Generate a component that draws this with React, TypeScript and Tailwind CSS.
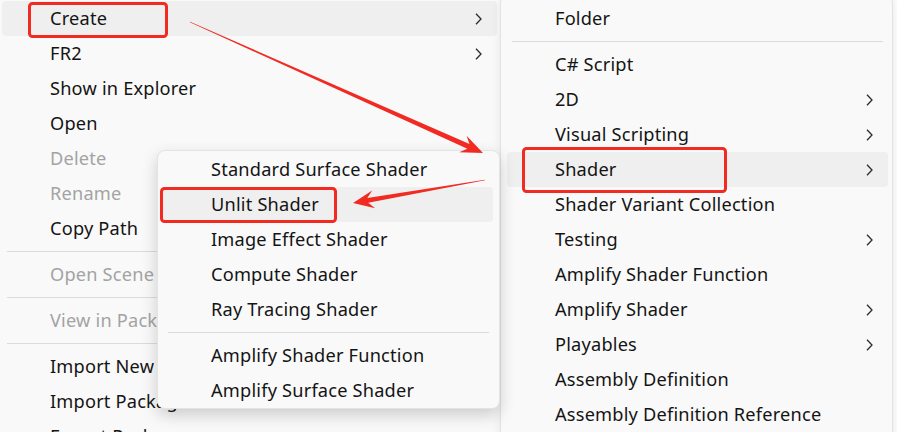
import React from "react";

type Item = { t: string; hl?: boolean; sub?: boolean; dis?: boolean } | "sep";

const leftItems: Item[] = [
  { t: "Create", hl: true, sub: true },
  { t: "FR2", sub: true },
  { t: "Show in Explorer" },
  { t: "Open" },
  { t: "Delete", dis: true },
  { t: "Rename", dis: true },
  { t: "Copy Path" },
  "sep",
  { t: "Open Scene Additive", dis: true },
  "sep",
  { t: "View in Package Manager", dis: true },
  "sep",
  { t: "Import New Asset..." },
  { t: "Import Package", sub: true },
  { t: "Export Package..." },
];

const shaderItems: Item[] = [
  { t: "Standard Surface Shader" },
  { t: "Unlit Shader", hl: true },
  { t: "Image Effect Shader" },
  { t: "Compute Shader" },
  { t: "Ray Tracing Shader" },
  "sep",
  { t: "Amplify Shader Function" },
  { t: "Amplify Surface Shader" },
];

const createItems: Item[] = [
  { t: "Folder" },
  "sep",
  { t: "C# Script" },
  { t: "2D", sub: true },
  { t: "Visual Scripting", sub: true },
  { t: "Shader", hl: true, sub: true },
  { t: "Shader Variant Collection" },
  { t: "Testing", sub: true },
  { t: "Amplify Shader Function" },
  { t: "Amplify Shader", sub: true },
  { t: "Playables", sub: true },
  { t: "Assembly Definition" },
  { t: "Assembly Definition Reference" },
];

function Chevron() {
  return (
    <svg width="7" height="12" viewBox="0 0 7 12" className="shrink-0">
      <path d="M1 0.8 L6 6 L1 11.2" fill="none" stroke="#2b2b2b" strokeWidth="1.3" />
    </svg>
  );
}

function Menu({ items, rowCls, sepCls }: { items: Item[]; rowCls: string; sepCls: string }) {
  return (
    <>
      {items.map((it, i) =>
        it === "sep" ? (
          <div key={i} className="h-[11px] flex items-center">
            <div className={`h-px bg-[#dcdcdc] flex-1 ${sepCls}`} />
          </div>
        ) : (
          <div
            key={i}
            className={`h-[35px] flex items-center rounded-[4px] pl-[48px] pr-[15px] whitespace-nowrap ${rowCls} ${
              it.hl ? "bg-[#efefef]" : ""
            } ${it.dis ? "text-[#a3a3a3]" : "text-[#141414]"}`}
          >
            <span className="flex-1">{it.t}</span>
            {it.sub && <Chevron />}
          </div>
        )
      )}
    </>
  );
}

function Arrow({ x1, y1, x2, y2, head = 22, hw = 9, sw = 2.6 }: { x1: number; y1: number; x2: number; y2: number; head?: number; hw?: number; sw?: number }) {
  const dx = x2 - x1;
  const dy = y2 - y1;
  const L = Math.hypot(dx, dy);
  const ux = dx / L;
  const uy = dy / L;
  const nx = -uy;
  const ny = ux;
  const neckX = x2 - (head - 6) * ux;
  const neckY = y2 - (head - 6) * uy;
  const bX = x2 - head * ux;
  const bY = y2 - head * uy;
  const pts = [
    [x1 + nx * 0.3, y1 + ny * 0.3],
    [neckX + nx * sw, neckY + ny * sw],
    [bX + nx * hw, bY + ny * hw],
    [x2, y2],
    [bX - nx * hw, bY - ny * hw],
    [neckX - nx * sw, neckY - ny * sw],
    [x1 - nx * 0.3, y1 - ny * 0.3],
  ]
    .map((p) => p.join(","))
    .join(" ");
  return <polygon points={pts} fill="#f12a22" />;
}

export default function App() {
  return (
    <div
      className="relative w-[897px] h-[432px] overflow-hidden bg-[#fcfcfc] text-[18.2px] tracking-[0.2px]"
      style={{ fontFamily: '"Noto Sans", "Liberation Sans", sans-serif' }}
    >
      {/* main context menu */}
      <div className="w-[520px] h-[460px] bg-[#f9f9f9] pt-px">
        <Menu items={leftItems} rowCls="ml-[2px] mr-[23px]" sepCls="ml-[7px]" />
      </div>

      {/* Create submenu */}
      <div className="absolute left-[500px] top-[-5px] w-[393px] h-[460px] bg-[#f9f9f9] border border-[#e2e2e2] rounded-[8px] pt-[5px] shadow-[0_2px_10px_rgba(0,0,0,0.08)]">
        <Menu items={createItems} rowCls="ml-[6px] mr-[4px]" sepCls="ml-[11px] mr-[9px]" />
      </div>

      {/* Shader submenu */}
      <div className="absolute left-[157px] top-[150px] w-[343px] bg-[#f9f9f9] border border-[#e4e4e4] rounded-[8px] pt-px shadow-[0_6px_16px_rgba(0,0,0,0.18)]">
        <Menu items={shaderItems} rowCls="ml-[5px] mr-[6px]" sepCls="mx-[10px]" />
      </div>

      {/* annotations */}
      <svg className="absolute inset-0 pointer-events-none" width="897" height="432">
        <rect x="29.5" y="3.5" width="137" height="33" rx="3" fill="none" stroke="#f12a22" strokeWidth="3" />
        <rect x="161.5" y="188.5" width="174" height="33" rx="3" fill="none" stroke="#f12a22" strokeWidth="3" />
        <rect x="523.5" y="148.5" width="202" height="43" rx="3" fill="none" stroke="#f12a22" strokeWidth="3" />
        <Arrow x1={190} y1={22} x2={483} y2={153} />
        <Arrow x1={485} y1={180} x2={353} y2={203} head={21} hw={9} sw={2.4} />
      </svg>
    </div>
  );
}
